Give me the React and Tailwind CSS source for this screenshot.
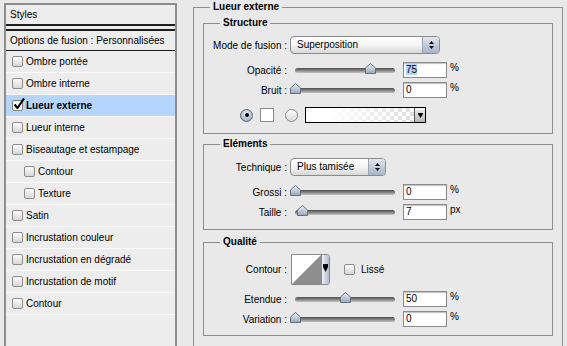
import React from "react";

const styleItems = [
  { label: "Ombre portée" },
  { label: "Ombre interne" },
  { label: "Lueur externe", checked: true },
  { label: "Lueur interne" },
  { label: "Biseautage et estampage" },
  { label: "Contour", sub: true },
  { label: "Texture", sub: true },
  { label: "Satin" },
  { label: "Incrustation couleur" },
  { label: "Incrustation en dégradé" },
  { label: "Incrustation de motif" },
  { label: "Contour" },
];

const Checkbox = ({ checked }) => (
  <span
    className={
      checked
        ? "relative block h-[11px] w-[11px] shrink-0 rounded-[2px] border border-[#7d7d7d] bg-white"
        : "relative block h-[11px] w-[11px] shrink-0 rounded-[2px] border border-[#8d8d8d] bg-gradient-to-b from-[#fdfdfd] to-[#d6d6d6]"
    }
  >
    {checked && (
      <svg viewBox="0 0 12 12" className="absolute -top-[3px] left-[0px] h-[12px] w-[12px]">
        <path d="M1.5 6.5 L4.5 10 L11 0.5" fill="none" stroke="#000" strokeWidth="2.2" strokeLinejoin="round" />
      </svg>
    )}
  </span>
);

const Radio = ({ on }) =>
  on ? (
    <span className="flex h-[13px] w-[13px] shrink-0 items-center justify-center rounded-full border border-[#56657a] bg-[radial-gradient(circle_at_50%_35%,#eef3f8,#8fa0b4)]">
      <span className="block h-[4px] w-[4px] rounded-full bg-black" />
    </span>
  ) : (
    <span className="block h-[13px] w-[13px] shrink-0 rounded-full border border-[#8a8a8a] bg-gradient-to-b from-[#ffffff] to-[#d8d8d8]" />
  );

const Legend = ({ children }) => (
  <legend className="ml-[16px] px-[3px] text-[10px] font-bold leading-[14px]">{children}</legend>
);

const Label = ({ children }) => <span className="w-[83px] shrink-0 text-right">{children}</span>;

const Select = ({ value, className }) => (
  <div
    className={
      "ml-[3px] flex h-[18px] overflow-hidden rounded-[4px] border border-[#8b8b8b] bg-gradient-to-b from-white via-[#f5f5f5] to-[#d9d9d9] " +
      className
    }
  >
    <span className="flex-1 pl-[6px] leading-[16px]">{value}</span>
    <span className="flex w-[17px] flex-col items-center justify-center gap-[2px] border-l border-[#9aa6b4] bg-gradient-to-b from-[#e2e8ef] to-[#a6b4c5]">
      <svg width="5" height="3" viewBox="0 0 5 3">
        <path d="M2.5 0 L5 3 H0 Z" fill="#111" />
      </svg>
      <svg width="5" height="3" viewBox="0 0 5 3">
        <path d="M0 0 H5 L2.5 3 Z" fill="#111" />
      </svg>
    </span>
  </div>
);

const Slider = ({ value }) => (
  <div className="relative ml-[3px] h-[16px] w-[110px] shrink-0">
    <div className="absolute left-[5px] right-[5px] top-[6px] h-[5px] rounded-full bg-gradient-to-b from-[#4d4d4d] via-[#868686] to-[#c4c4c4]" />
    <svg width="11" height="11" viewBox="0 0 11 11" className="absolute top-[1px]" style={{ left: value - 0.5 }}>
      <defs>
        <linearGradient id="thumbGrad" x1="0" y1="0" x2="0" y2="1">
          <stop offset="0" stopColor="#eef2f6" />
          <stop offset="1" stopColor="#98a7b8" />
        </linearGradient>
      </defs>
      <path d="M5.5 0.5 L10.5 5 V10.5 H0.5 V5 Z" fill="url(#thumbGrad)" stroke="#617084" strokeWidth="1" />
    </svg>
  </div>
);

const NumField = ({ value, unit, selected }) => (
  <>
    <div className="ml-[3px] h-[16px] w-[44px] shrink-0 border border-[#8a8a8a] bg-white pl-[2px] leading-[14px] shadow-[inset_0_1px_1px_rgba(0,0,0,0.25)]">
      <span className={selected ? "bg-[#b4d5fe]" : ""}>{value}</span>
    </div>
    <span className="ml-[3px] self-start leading-[12px]">{unit}</span>
  </>
);

const SliderRow = ({ label, value, unit, selected, className }) => (
  <div className={"flex h-[16px] items-center " + className}>
    <Label>{label}</Label>
    <Slider value={value} />
    <NumField value={value} unit={unit} selected={selected} />
  </div>
);

export default function App() {
  return (
    <div className="flex h-screen items-start overflow-hidden bg-[#e9e9e9] font-['Liberation_Sans',Arial,sans-serif] text-[10px] text-black">
      {/* left list of styles */}
      <div className="ml-[4px] mt-[3px] h-[360px] w-[173px] shrink-0 border-2 border-[#8e8e8e] bg-[#ededed]">
        <div className="flex h-[21px] items-center border-b-2 border-[#1e1e1e] pl-[4px]">Styles</div>
        <div className="h-[3px]" />
        <div className="flex h-[22px] items-center border-y border-t-2 border-[#1e1e1e] pl-[4px]">
          Options de fusion : Personnalisées
        </div>
        {styleItems.map((item, i) => (
          <div
            key={i}
            className={
              "flex h-[22px] items-center gap-[3px] border-b border-[#fbfbfb] " +
              (item.sub ? "pl-[18px] " : "pl-[6px] ") +
              (item.checked ? "bg-[#b5d5fd] font-bold" : "")
            }
          >
            <Checkbox checked={item.checked} />
            <span>{item.label}</span>
          </div>
        ))}
      </div>

      {/* right settings */}
      <fieldset className="ml-[16px] h-[370px] w-[370px] shrink-0 border border-[#8f8f8f]">
        <Legend>Lueur externe</Legend>
        <div className="px-[9px] pt-[2px]">
          <fieldset className="border border-[#8f8f8f]">
            <Legend>Structure</Legend>
            <div className="flex flex-col pb-[10px] pt-[6px]">
              <div className="flex h-[18px] items-center">
                <Label>Mode de fusion :</Label>
                <Select value="Superposition" className="w-[150px]" />
              </div>
              <SliderRow label="Opacité :" value={75} unit="%" selected className="mt-[8px]" />
              <SliderRow label="Bruit :" value={0} unit="%" className="mt-[4px]" />
              <div className="mt-[9px] flex h-[16px] items-center pl-[36px]">
                <Radio on />
                <span className="ml-[7px] block h-[14px] w-[14px] border border-[#8a8a8a] bg-white" />
                <span className="ml-[11px] flex">
                  <Radio />
                </span>
                <div className="ml-[7px] flex h-[16px] w-[121px] border border-black bg-[image:repeating-conic-gradient(#dedede_0%_25%,#ffffff_0%_50%)] bg-[length:8px_8px]">
                  <div className="flex-1 bg-gradient-to-r from-white from-20% to-transparent" />
                  <div className="flex w-[11px] items-center justify-center border-l border-[#555] bg-gradient-to-b from-[#f4f4f4] to-[#b5b5b5]">
                    <svg width="5" height="5" viewBox="0 0 5 5">
                      <path d="M0 0 H5 V1 L2.5 5 L0 1 Z" fill="#000" />
                    </svg>
                  </div>
                </div>
              </div>
            </div>
          </fieldset>

          <fieldset className="mt-[3px] border border-[#8f8f8f]">
            <Legend>Eléments</Legend>
            <div className="flex flex-col pb-[9px] pt-[7px]">
              <div className="flex h-[18px] items-center">
                <Label>Technique :</Label>
                <Select value="Plus tamisée" className="w-[96px]" />
              </div>
              <SliderRow label="Grossi :" value={0} unit="%" className="mt-[8px]" />
              <SliderRow label="Taille :" value={7} unit="px" className="mt-[4px]" />
            </div>
          </fieldset>

          <fieldset className="mt-[5px] border border-[#8f8f8f]">
            <Legend>Qualité</Legend>
            <div className="flex flex-col pb-[8px] pt-[5px]">
              <div className="flex h-[31px] items-center">
                <Label>Contour :</Label>
                <div className="ml-[4px] flex h-[31px] w-[39px] overflow-hidden rounded-r-[3px] border border-[#8a8a8a] bg-white">
                  <svg width="29" height="29" viewBox="0 0 29 29" className="shrink-0">
                    <rect width="29" height="29" fill="#fff" />
                    <path d="M0 29 L29 0 V29 Z" fill="#8e8e8e" />
                  </svg>
                  <div className="flex flex-1 items-start justify-center border-l border-[#8a8a8a] bg-gradient-to-r from-[#edf1f5] to-[#b0bccb] pt-[9px]">
                    <svg width="5" height="8" viewBox="0 0 5 8">
                      <path d="M0 0 H5 V3 L2.5 8 L0 3 Z" fill="#000" />
                    </svg>
                  </div>
                </div>
                <span className="ml-[14px] flex">
                  <Checkbox />
                </span>
                <span className="ml-[6px]">Lissé</span>
              </div>
              <SliderRow label="Etendue :" value={50} unit="%" className="mt-[6px]" />
              <SliderRow label="Variation :" value={0} unit="%" className="mt-[4px]" />
            </div>
          </fieldset>
        </div>
      </fieldset>
    </div>
  );
}
